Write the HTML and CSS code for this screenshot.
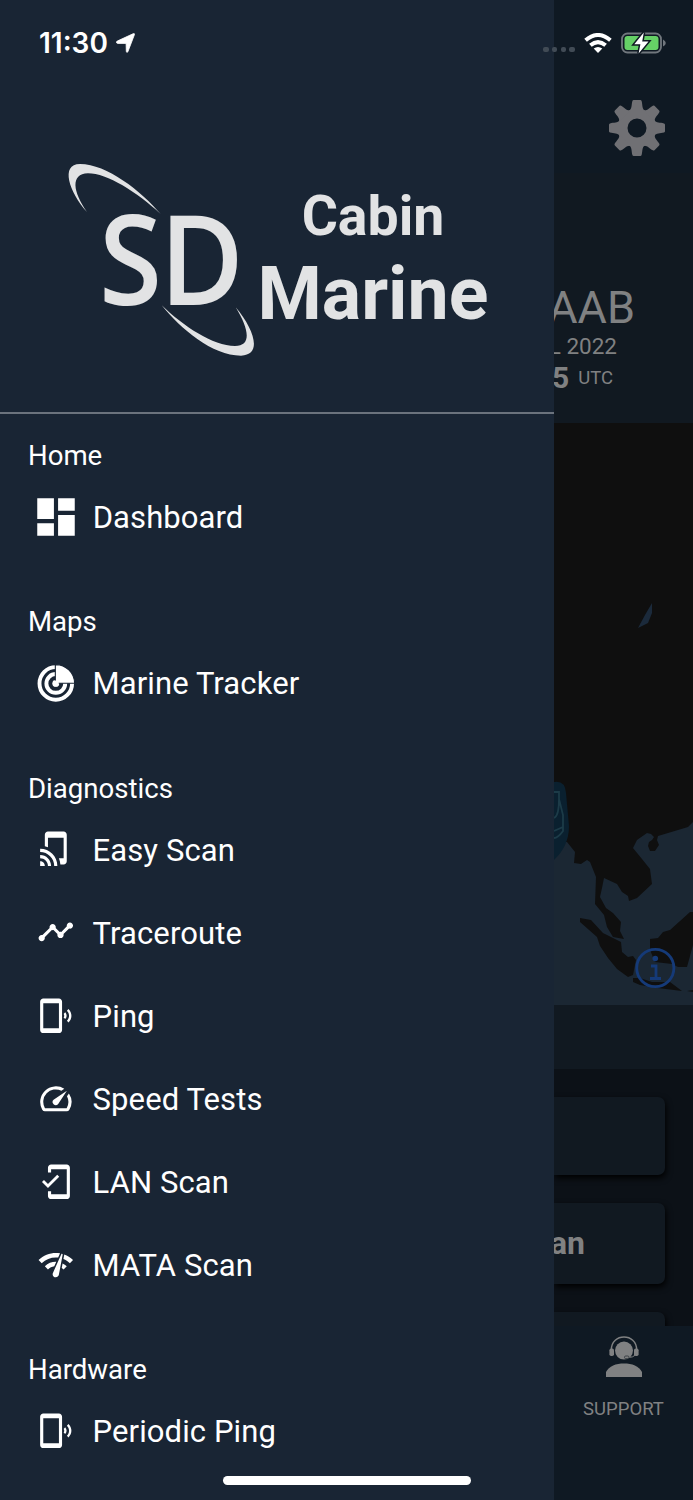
FILE: index.html
```
<!DOCTYPE html>
<html lang="en">
<head>
    <meta charset="UTF-8">
    <meta name="viewport" content="width=device-width, initial-scale=1.0">
    <title>SD Cabin Marine</title>
    <link rel="stylesheet" href="styles.css">
</head>
<body>
<div class="screen">

    <!-- Side menu -->
    <nav class="drawer">
        <div class="brand">
            <svg class="brand-logo" viewBox="0 0 192 194">
                <path d="M22 49C4 29 -5 1 15 1C42 1 76 28 95.7 51C72 29 42 10.3 23 10.3C5 11 8 29 22 49Z"/>
                <path d="M96.7 142.3C116 166 147 192.7 176 192.7C198 192 189 166 170.7 144.3C184 166 187 183 170 183C148 183 118 163 96.7 142.3Z"/>
                <text class="logo-letter" x="34" y="141.6" textLength="63" lengthAdjust="spacingAndGlyphs">S</text>
                <text class="logo-letter" x="94.7" y="141.6" textLength="84" lengthAdjust="spacingAndGlyphs">D</text>
            </svg>
            <div class="brand-name">
                <span class="brand-cabin">Cabin</span>
                <span class="brand-marine">Marine</span>
            </div>
        </div>

        <div class="menu">
            <section class="group">
                <h2>Home</h2>
                <a class="item">
                    <svg class="icon icon-large" viewBox="0 0 24 24"><path d="M3 13h8V3H3v10zm0 8h8v-6H3v6zm10 0h8V11h-8v10zm0-18v6h8V3h-8z"/></svg>
                    <span>Dashboard</span>
                </a>
            </section>

            <section class="group">
                <h2>Maps</h2>
                <a class="item">
                    <svg class="icon" viewBox="0 0 24 24">
                        <g fill="none" stroke="#fff" stroke-width="2.5">
                            <circle cx="12" cy="12.4" r="10.4"/>
                            <circle cx="12" cy="12.4" r="6"/>
                        </g>
                        <circle cx="12" cy="12.4" r="2.2"/>
                        <path d="M11.7 .4A12 12 0 0 1 24 12.3H11.7Z" stroke="#192534" stroke-width=".7"/>
                        <circle cx="12" cy="12.4" r="1.9"/>
                    </svg>
                    <span>Marine Tracker</span>
                </a>
            </section>

            <section class="group">
                <h2>Diagnostics</h2>
                <a class="item">
                    <svg class="icon" viewBox="0 0 24 24"><path d="M2 16v2c2.76 0 5 2.24 5 5h2c0-3.87-3.13-7-7-7zm0 4v3h3c0-1.66-1.34-3-3-3zm0-8v2c4.97 0 9 4.03 9 9h2c0-6.08-4.92-11-11-11zM17 1.01L7 1c-1.1 0-2 .9-2 2v7.37c.69.16 1.36.37 2 .64V5h10v13h-3.03c.52 1.25.84 2.59.95 4H17c1.1 0 2-.9 2-2V3c0-1.1-.9-1.99-2-1.99z"/></svg>
                    <span>Easy Scan</span>
                </a>
                <a class="item">
                    <svg class="icon" viewBox="0 0 24 24"><path d="M23 8c0 1.1-.9 2-2 2-.18 0-.35-.02-.51-.07l-3.56 3.55c.05.16.07.34.07.52 0 1.1-.9 2-2 2s-2-.9-2-2c0-.18.02-.36.07-.52l-2.55-2.55c-.16.05-.34.07-.52.07s-.36-.02-.52-.07l-4.55 4.56c.05.16.07.33.07.51 0 1.1-.9 2-2 2s-2-.9-2-2 .9-2 2-2c.18 0 .35.02.51.07l4.56-4.55C8.02 9.36 8 9.18 8 9c0-1.1.9-2 2-2s2 .9 2 2c0 .18-.02.36-.07.52l2.55 2.55c.16-.05.34-.07.52-.07s.36.02.52.07l3.55-3.56C19.02 8.35 19 8.18 19 8c0-1.1.9-2 2-2s2 .9 2 2z"/></svg>
                    <span>Traceroute</span>
                </a>
                <a class="item">
                    <svg class="icon" viewBox="0 0 24 24"><path d="M20.1 7.7l-1 1c1.8 1.8 1.8 4.6 0 6.5l1 1c2.5-2.3 2.5-6.1 0-8.5zM18 9.8l-1 1c.5.7.5 1.6 0 2.3l1 1c1.2-1.2 1.2-3 0-4.3zM14 1H4c-1.1 0-2 .9-2 2v18c0 1.1.9 2 2 2h10c1.1 0 2-.9 2-2V3c0-1.1-.9-2-2-2zm0 19H4V4h10v16z"/></svg>
                    <span>Ping</span>
                </a>
                <a class="item">
                    <svg class="icon" viewBox="0 0 24 24"><path d="M20.38 8.57l-1.23 1.85a8 8 0 0 1-.22 7.58H5.07A8 8 0 0 1 15.58 6.85l1.85-1.23A10 10 0 0 0 3.35 19a2 2 0 0 0 1.72 1h13.85a2 2 0 0 0 1.74-1 10 10 0 0 0-.27-10.44zm-9.79 6.84a2 2 0 0 0 2.83 0l5.66-8.49-8.49 5.66a2 2 0 0 0 0 2.83z"/></svg>
                    <span>Speed Tests</span>
                </a>
                <a class="item">
                    <svg class="icon" viewBox="0 0 24 24"><path d="M19 1H9c-1.1 0-2 .9-2 2v3h2V4h10v16H9v-2H7v3c0 1.1.9 2 2 2h10c1.1 0 2-.9 2-2V3c0-1.1-.9-2-2-2zM7.01 13.47l-2.55-2.55-1.27 1.27L7 16l7.19-7.19-1.27-1.27z"/></svg>
                    <span>LAN Scan</span>
                </a>
                <a class="item">
                    <svg class="icon" viewBox="0 0 24 24"><path d="M15.9 5c-.17 0-.32.09-.41.23l-.07.15-5.18 11.65c-.16.29-.26.61-.26.96 0 1.11.9 2.01 2.01 2.01.96 0 1.77-.68 1.96-1.59l.01-.03L16.4 5.5c0-.28-.22-.5-.5-.5zM1 9l2 2c2.88-2.88 6.79-4.08 10.53-3.62l1.19-2.68C9.89 3.84 4.74 5.27 1 9zm20 2l2-2c-1.64-1.64-3.55-2.82-5.59-3.57l-.53 2.82c1.5.62 2.9 1.53 4.12 2.75zm-4 4l2-2c-.8-.8-1.7-1.42-2.66-1.89l-.55 2.92c.42.27.83.59 1.21.97zM5 13l2 2c1.13-1.13 2.56-1.79 4.03-2l1.28-2.88c-2.63-.08-5.3.87-7.31 2.88z"/></svg>
                    <span>MATA Scan</span>
                </a>
            </section>

            <section class="group">
                <h2>Hardware</h2>
                <a class="item">
                    <svg class="icon" viewBox="0 0 24 24"><path d="M20.1 7.7l-1 1c1.8 1.8 1.8 4.6 0 6.5l1 1c2.5-2.3 2.5-6.1 0-8.5zM18 9.8l-1 1c.5.7.5 1.6 0 2.3l1 1c1.2-1.2 1.2-3 0-4.3zM14 1H4c-1.1 0-2 .9-2 2v18c0 1.1.9 2 2 2h10c1.1 0 2-.9 2-2V3c0-1.1-.9-2-2-2zm0 19H4V4h10v16z"/></svg>
                    <span>Periodic Ping</span>
                </a>
            </section>
        </div>
    </nav>

    <!-- Dimmed dashboard page -->
    <main class="page">
        <header class="toolbar">
            <svg class="gear" viewBox="-28 -28 56 56">
                <defs>
                    <path id="tooth" d="M-8.2 -17C-4.6 -19.5 -5.8 -23 -4.6 -27Q-4.3 -28 -3.3 -28H3.3Q4.3 -28 4.6 -27C5.8 -23 4.6 -19.5 8.2 -17Z"/>
                </defs>
                <circle r="14.3" fill="none" stroke="#707074" stroke-width="9.6"/>
                <use href="#tooth"/>
                <use href="#tooth" transform="rotate(45)"/>
                <use href="#tooth" transform="rotate(90)"/>
                <use href="#tooth" transform="rotate(135)"/>
                <use href="#tooth" transform="rotate(180)"/>
                <use href="#tooth" transform="rotate(225)"/>
                <use href="#tooth" transform="rotate(270)"/>
                <use href="#tooth" transform="rotate(315)"/>
            </svg>
        </header>

        <div class="summary">
            <div class="tail">AAB</div>
            <div class="date">L 2022</div>
            <div class="time"><b>5</b><span>UTC</span></div>
        </div>

        <svg class="map" viewBox="0 0 139 582">
            <rect width="139" height="582" fill="#1b2733"/>
            <g fill="#0f0f0f">
                <path d="M0 0H139V399L134 404L104 413L103 417L105 422L101 428L96 428L94 423L95 419L98 417L100 414L97 411L93 410L83 417L79 425L88 436L96 446L98 461L83 475L75 478L74 473L68 469L63 461L50 455L48 465L46 474L52 485L59 490L67 499L66 508L70 516L59 514L53 504L50 492L41 481L42 454L36 439L33 437L27 441L20 440L21 429L13 419H0Z"/>
                <path d="M26 495L37 497L49 510L67 519L68 529L74 534L79 533L82 537L79 552L74 554L63 546L54 535L46 523L43 514L26 499Z"/>
                <path d="M79 555H86L98 559H116L128 568L104 565L86 562L79 559Z"/>
                <path d="M96 516L104 515L109 509L116 507L136 489H139V522L133 544H124L118 541L101 539L96 527Z"/>
                <path d="M133 568L139 567V569Z"/>
            </g>
            <path d="M98 180V190L94 200L84 205L91 192Z" fill="#1b2a3b"/>
            <path d="M0 359Q11 357 12 370L15 403Q15 423 0 437Z" fill="#0a202f"/>
            <path d="M0 369H5V376L9 392V408Q4 415 0 415M0 395Q5 393 5 376M0 408L9 404" fill="none" stroke="#1c3b48" stroke-width="1.8"/>
            <g fill="none" stroke="#153a78" stroke-width="2.8">
                <circle cx="101.3" cy="545" r="18.6"/>
                <path d="M97 543H102V555.5M96 555.5H107"/>
            </g>
            <circle cx="101.3" cy="535.5" r="2.8" fill="#153a78"/>
        </svg>

        <div class="band"></div>

        <div class="cards">
            <div class="card"></div>
            <div class="card card-tall">an</div>
            <div class="card"></div>
        </div>

        <footer class="tabbar">
            <svg class="support" viewBox="0 0 36 42">
                <circle cx="18" cy="14.6" r="9"/>
                <path d="M0 41V36C3 30 10 27.5 18 27.5S33 30 36 36V41Z"/>
                <path d="M5.3 14C5.3 -3.3 30.7 -3.3 30.7 14" fill="none" stroke="#808182" stroke-width="1.5"/>
                <rect x="3.4" y="12.5" width="4.6" height="7.5" rx="1.8"/>
                <rect x="28" y="12.5" width="4.6" height="7.5" rx="1.8"/>
                <path d="M29.5 19Q27 21.5 22 21.5" fill="none" stroke="#808182" stroke-width="1"/>
                <rect x="18.5" y="20" width="4.5" height="2.6" rx="1.2" fill="none" stroke="#2c3339" stroke-width=".8"/>
            </svg>
            <span>SUPPORT</span>
        </footer>
    </main>

    <!-- Phone status bar -->
    <div class="statusbar">
        <span class="clock">11:30</span>
        <svg class="location" viewBox="0 0 19 20"><path d="M17 .8Q19 0 18.3 2L12 18.4Q11 20.4 10.3 18.4L10.1 10.4H1.6Q-1 9.6 1.2 8.1Z" stroke="#fff" stroke-width=".8"/></svg>
        <span class="signal"><i></i><i></i><i></i><i></i></span>
        <svg class="wifi" viewBox="0 0 28 20">
            <path d="M14 20L9.7 15.6Q14 12.3 18.3 15.6Z"/>
            <path d="M6.4 12.3Q14 6 21.6 12.3M1.6 7.3Q14 -3.3 26.4 7.3" fill="none" stroke="#fff" stroke-width="4"/>
        </svg>
        <svg class="battery" viewBox="0 0 45 22">
            <rect x="1" y="1.5" width="39" height="19" rx="5.5" fill="none" stroke="#71777d" stroke-width="1.8"/>
            <path d="M42 7.5Q44.8 9 44.8 11T42 14.5Z" fill="#71777d"/>
            <rect x="3.5" y="4" width="34" height="14" rx="3" fill="#65d066"/>
            <path d="M22.8 .5L13.3 12.2H19.4L17.6 21.5L27.5 9.4H21.2Z" fill="#fff" stroke="#0f1822" stroke-width="3" paint-order="stroke"/>
        </svg>
    </div>

    <div class="home-indicator"></div>
</div>
</body>
</html>
```
FILE: styles.css
```
* {
    box-sizing: border-box;
}
body {
    margin: 0;
    font-family: Roboto, sans-serif;
    background-color: #0f1923;
}
svg {
    display: block;
    flex: none;
}
.screen {
    position: relative;
    display: flex;
    width: 693px;
    height: 1500px;
    overflow: hidden;
}

/* side menu */
.drawer {
    width: 554px;
    flex: none;
    background-color: #192534;
    color: #fff;
    overflow: hidden;
}
.brand {
    display: flex;
    height: 414px;
    padding: 163px 0 0 65px;
    border-bottom: 2px solid #6b737d;
}
.brand-logo {
    width: 192px;
    height: 194px;
    overflow: visible;
    fill: #e2e3e4;
}
.logo-letter {
    font-family: "Open Sans", sans-serif;
    font-weight: 600;
    font-size: 125px;
}
.brand-name {
    display: flex;
    flex-direction: column;
    align-items: center;
    width: 232px;
    padding-top: 21px;
    color: #e2e3e4;
    font-weight: 700;
}
.brand-cabin {
    font-size: 55.4px;
    line-height: 66px;
}
.brand-marine {
    font-size: 73.5px;
    line-height: 88px;
}
.menu {
    padding-top: 21px;
}
.group {
    margin-bottom: 43.2px;
}
.group h2 {
    height: 40px;
    margin: 0;
    padding-left: 28px;
    font-size: 27.6px;
    font-weight: 400;
    line-height: 42px;
}
.item {
    display: flex;
    align-items: center;
    height: 83.1px;
    padding-left: 37px;
    font-size: 31px;
    letter-spacing: 0.1px;
}
.item span {
    margin-left: 18px;
    padding-top: 2px;
}
.icon {
    width: 37.6px;
    height: 37.6px;
    fill: #fff;
}
.icon-large {
    width: 50px;
    height: 50px;
    margin: 0 -6.2px;
}

/* page behind the menu */
.page {
    display: flex;
    flex-direction: column;
    width: 139px;
    overflow: hidden;
    color: #808182;
}
.toolbar {
    display: flex;
    justify-content: flex-end;
    height: 173px;
    padding: 100px 28px 0 0;
    background-color: #0f1923;
}
.gear {
    width: 56px;
    height: 56px;
    fill: #707074;
}
.summary {
    height: 250px;
    padding-top: 108px;
    background-color: #111921;
}
.summary > div {
    display: flex;
    justify-content: flex-end;
    white-space: nowrap;
}
.tail {
    padding-right: 58px;
    font-size: 45px;
    line-height: 53px;
}
.date {
    padding-right: 76px;
    font-size: 22.5px;
    line-height: 25px;
}
.time {
    align-items: center;
    gap: 9px;
    padding-right: 80px;
    font-size: 18.5px;
    line-height: 38px;
}
.time b {
    font-size: 30px;
}
.map {
    width: 139px;
    height: 582px;
}
.band {
    height: 64px;
    background-color: #111921;
}
.cards {
    display: flex;
    flex-direction: column;
    gap: 28px;
    height: 257px;
    padding: 28px 28px 0 0;
    overflow: hidden;
    background-color: #0c1117;
}
.card {
    flex: none;
    height: 78px;
    padding-left: 2px;
    border-radius: 0 7px 7px 0;
    background-color: #111921;
    box-shadow: 1px 3px 6px #000;
}
.card-tall {
    display: flex;
    align-items: center;
    justify-content: flex-end;
    height: 81px;
    padding-right: 80px;
    padding-bottom: 2px;
    font-size: 32px;
    font-weight: 700;
}
.tabbar {
    display: flex;
    flex: 1;
    flex-direction: column;
    align-items: center;
    padding-top: 10px;
    background-color: #0f1923;
    font-size: 18.5px;
}
.support {
    width: 36px;
    height: 42px;
    fill: #808182;
}
.tabbar span {
    margin-top: 20px;
    line-height: 22px;
}

/* phone chrome, drawn over everything */
.statusbar {
    position: absolute;
    top: 0;
    left: 0;
    display: flex;
    align-items: center;
    width: 100%;
    height: 85px;
    padding: 0 27px 0 39px;
    color: #fff;
}
.clock {
    width: 77px;
    font-family: Inter, sans-serif;
    font-size: 28px;
    font-weight: 600;
}
.location {
    width: 19px;
    height: 20px;
    fill: #fff;
}
.signal {
    display: flex;
    gap: 3.2px;
    margin: 14px 9px 0 auto;
}
.signal i {
    width: 5.6px;
    height: 5.6px;
    border-radius: 2px;
    background-color: #414b55;
}
.wifi {
    width: 28px;
    height: 20px;
    margin-right: 9px;
    fill: #fff;
}
.battery {
    width: 45px;
    height: 22px;
}
.home-indicator {
    position: absolute;
    left: 223px;
    bottom: 15px;
    width: 248px;
    height: 9px;
    border-radius: 5px;
    background-color: #fff;
}
```
